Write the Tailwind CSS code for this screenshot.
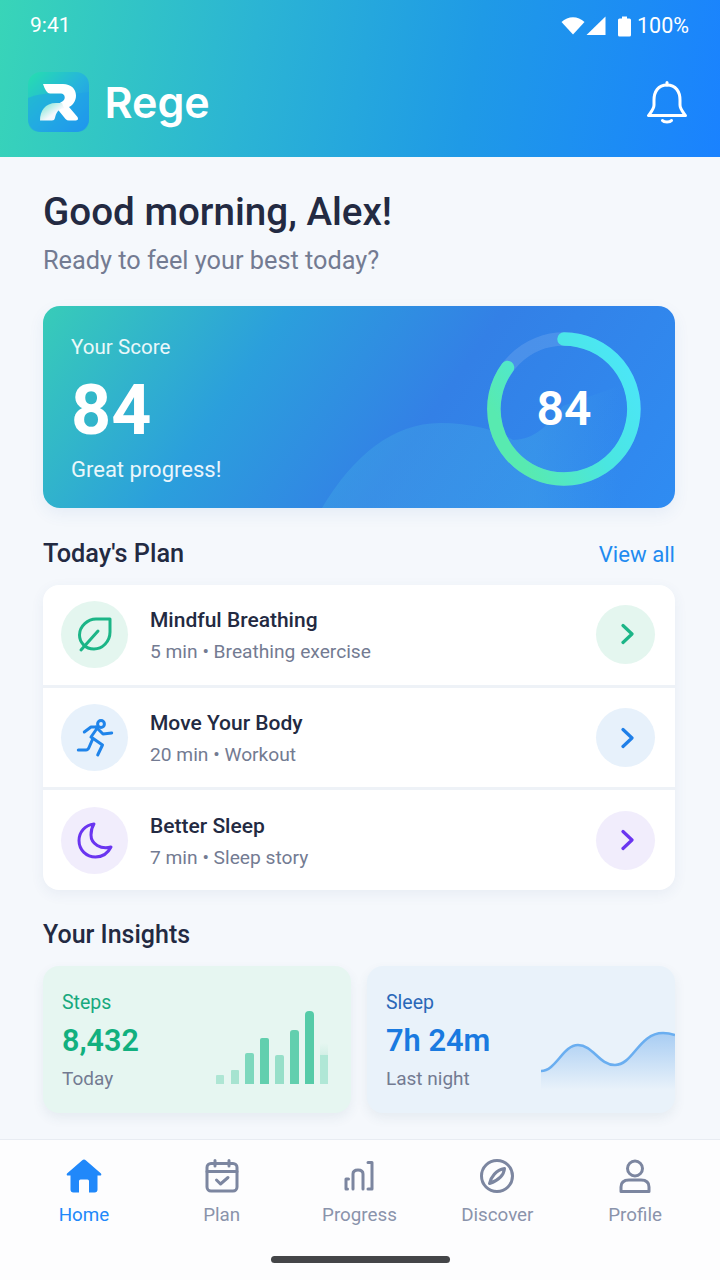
<!DOCTYPE html>
<html lang="en">
<head>
    <meta charset="UTF-8">
    <meta name="viewport" content="width=device-width, initial-scale=1.0">
    <title>Rege</title>
    <script src="https://cdn.jsdelivr.net/npm/@tailwindcss/browser@4"></script>
</head>
<body class="bg-[#f5f8fc] font-['Roboto',sans-serif] text-[#232a42]">
<div class="w-[720px] h-[1280px] flex flex-col overflow-hidden">

    <!-- Header -->
    <header class="h-[157px] shrink-0 text-white bg-[linear-gradient(100deg,#38d5b8_0%,#2bb4d4_35%,#1f9ae6_65%,#1a82ff_100%)]">
        <div class="h-[52px] pl-[30px] pr-[31px] flex items-center justify-between text-[21px]">
            <span>9:41</span>
            <div class="flex items-center">
                <svg class="mr-[1px]" width="24" height="20" viewBox="0 0 24 20" fill="#fff"><path d="M0.5 6 C7 -0.5 17 -0.5 23.5 6 L12 18.5Z"/></svg>
                <svg class="mr-[12px]" width="20" height="20" viewBox="0 0 20 20" fill="#fff"><path d="M19.5 0.5V19H0.5Z"/></svg>
                <svg class="mr-[6px]" width="13" height="21" viewBox="0 0 13 21" fill="#fff"><path d="M4 0.5H9V2.5H11.5Q13 2.5 13 4V19Q13 20.5 11.5 20.5H1.5Q0 20.5 0 19V4Q0 2.5 1.5 2.5H4Z"/></svg>
                <span class="text-[21.5px]">100%</span>
            </div>
        </div>
        <div class="mt-[20px] pl-[28px] pr-[33px] flex items-center justify-between">
            <div class="flex items-center gap-[15.5px]">
                <svg width="61" height="60" viewBox="0 0 61 60">
                    <defs>
                        <linearGradient id="logoBg" x1="0" y1="0" x2="1" y2="1"><stop offset="0" stop-color="#26dfae"/><stop offset="0.5" stop-color="#26b4dc"/><stop offset="1" stop-color="#1f8cf2"/></linearGradient>
                        <linearGradient id="logoLeaf" x1="0" y1="0" x2="1" y2="1"><stop offset="0" stop-color="#6fe3cf"/><stop offset="0.6" stop-color="#f4f8fc"/></linearGradient>
                    </defs>
                    <rect width="61" height="60" rx="13" fill="url(#logoBg)"/>
                    <path d="M0 26 C18 18 42 24 61 20 V47 Q61 60 48 60 H13 Q0 60 0 47Z" fill="#1f9fe8" opacity=".45"/>
                    <path d="M15 12 H35 C43 12 48 17 48 23.5 C48 29 45 33 41 35 L49.5 45 Q51 48 48 48.5 H41 Q39 48.5 37.5 47 L27 34 L35 29 C38 27 37 21.5 33 21.5 H22 Q18 21.5 15 12Z" fill="#fff"/>
                    <path d="M12 48.5 C12 39 17 31 28 31 H34 L36 36 C30 37 28 41 27 46 Q26.5 48.5 24 48.5Z" fill="url(#logoLeaf)"/>
                </svg>
                <span class="font-['Inter',sans-serif] font-semibold text-[43px] leading-none">Rege</span>
            </div>
            <svg width="40" height="44" viewBox="0 0 40 44" fill="none" stroke="#fff" stroke-width="3" stroke-linecap="round" stroke-linejoin="round">
                <path d="M20 5 C11 5 7 12 7 20 V25 C7 29 4 32 1.5 35.5 H38.5 C36 32 33 29 33 25 V20 C33 12 29 5 20 5Z"/>
                <path d="M20 2.5V5"/>
                <path d="M15.5 40.5 C17 42.5 23 42.5 24.5 40.5"/>
            </svg>
        </div>
    </header>

    <!-- Main -->
    <main class="flex-1 pl-[43px] pr-[45px] pt-[32px]">
        <h1 class="text-[38.6px] leading-[46px] font-medium">Good morning, Alex!</h1>
        <p class="mt-[10px] text-[25.3px] leading-[32px] text-[#737b92]">Ready to feel your best today?</p>

        <!-- Score card -->
        <section class="relative mt-[29px] h-[202px] rounded-[17px] overflow-hidden text-white shadow-[0_6px_16px_rgba(50,100,180,0.08)] bg-[linear-gradient(125deg,#38ccb8_0%,#2b9fdc_32%,#3380e6_60%,#2f8cf2_100%)]">
            <svg class="absolute inset-0" width="632" height="202" viewBox="0 0 632 202">
                <defs>
                    <linearGradient id="wave" x1="0" y1="0" x2="1" y2="0"><stop offset="0.6" stop-color="#46b4e6" stop-opacity=".3"/><stop offset="0.85" stop-color="#46b4e6" stop-opacity="0"/></linearGradient>
                </defs>
                <path d="M279 202 C310 150 350 117 397 117 C430 117 455 125 470 134 C490 134 505 120 520 100 L632 60 V202Z" fill="url(#wave)"/>
            </svg>
            <div class="relative h-full pl-[28px] pr-[34px] flex items-center justify-between">
                <div class="self-start pt-[28px]">
                    <p class="text-[20.6px] leading-[26px] text-white/90">Your Score</p>
                    <p class="mt-[10px] text-[70px] leading-[80px] font-bold">84</p>
                    <p class="mt-[6px] text-[22px] leading-[28px] text-white/90">Great progress!</p>
                </div>
                <div class="relative mt-[3px] w-[154px] h-[154px] flex items-center justify-center">
                    <svg class="absolute inset-0" width="154" height="154" viewBox="0 0 154 154" fill="none">
                        <defs>
                            <linearGradient id="ring" x1="1" y1="0.2" x2="0.1" y2="0.7"><stop offset="0" stop-color="#4ce6f8"/><stop offset="0.5" stop-color="#4ae6e0"/><stop offset="1" stop-color="#58eab0"/></linearGradient>
                        </defs>
                        <circle cx="77" cy="77" r="70" stroke="#fff" stroke-opacity=".12" stroke-width="13.5"/>
                        <path d="M77 7 A70 70 0 1 1 20.5 35.5" stroke="url(#ring)" stroke-width="13.5" stroke-linecap="round"/>
                    </svg>
                    <span class="relative text-[48px] leading-none font-semibold">84</span>
                </div>
            </div>
        </section>

        <!-- Today's plan -->
        <div class="mt-[30px] flex items-center justify-between">
            <h2 class="text-[25.3px] leading-[32px] font-medium">Today's Plan</h2>
            <a class="text-[22.2px] leading-[32px] text-[#1f8bf0]">View all</a>
        </div>
        <section class="mt-[15px] bg-white rounded-[16px] shadow-[0_4px_14px_rgba(50,80,140,0.07)] divide-y-[3px] divide-[#eef2f7]">
            <div class="h-[103px] pb-[2px] pl-[18px] pr-[20px] flex items-center">
                <div class="w-[67px] h-[67px] rounded-full bg-[#e4f6ef] flex items-center justify-center">
                    <svg width="40" height="40" viewBox="0 0 40 40" fill="none" stroke="#1cb587" stroke-width="3" stroke-linecap="round" stroke-linejoin="round">
                        <path d="M35 5 V18 C35 28 27 35 19 35 C10 35 4.5 28 4.5 21 C4.5 12 13 5 21 5Z"/>
                        <path d="M23 17 L6 36"/>
                    </svg>
                </div>
                <div class="ml-[22px] pt-[3px] flex-1">
                    <p class="text-[21px] leading-[28px] font-medium">Mindful Breathing</p>
                    <p class="mt-[4px] text-[19.2px] leading-[28px] text-[#737b92]">5 min • Breathing exercise</p>
                </div>
                <div class="w-[59px] h-[59px] rounded-full bg-[#e4f6ef] flex items-center justify-center">
                    <svg width="16" height="24" viewBox="0 0 16 24" fill="none" stroke="#1cb587" stroke-width="3.2" stroke-linecap="round" stroke-linejoin="round"><path d="M5 3.5 L14 12 L5 20.5"/></svg>
                </div>
            </div>
            <div class="h-[102px] pl-[18px] pr-[20px] flex items-center">
                <div class="w-[67px] h-[67px] rounded-full bg-[#e7f1fb] flex items-center justify-center">
                    <svg width="40" height="40" viewBox="0 0 40 40" fill="none" stroke="#1f84ea" stroke-width="3" stroke-linecap="round" stroke-linejoin="round">
                        <circle cx="26" cy="6" r="3.4"/>
                        <path d="M9.3 14 L16 9 H23 L16 19 L27.5 27 L22.7 37"/>
                        <path d="M21 9 L28 16 L36.7 15"/>
                        <path d="M3.3 32 H11 Q13 32 14 29.5 L17.7 21"/>
                    </svg>
                </div>
                <div class="ml-[22px] pt-[3px] flex-1">
                    <p class="text-[21px] leading-[28px] font-medium">Move Your Body</p>
                    <p class="mt-[4px] text-[19.2px] leading-[28px] text-[#737b92]">20 min • Workout</p>
                </div>
                <div class="w-[59px] h-[59px] rounded-full bg-[#e7f1fb] flex items-center justify-center">
                    <svg width="16" height="24" viewBox="0 0 16 24" fill="none" stroke="#1f7fe8" stroke-width="3.2" stroke-linecap="round" stroke-linejoin="round"><path d="M5 3.5 L14 12 L5 20.5"/></svg>
                </div>
            </div>
            <div class="h-[100px] pl-[18px] pr-[20px] flex items-center">
                <div class="w-[67px] h-[67px] rounded-full bg-[#f1edfc] flex items-center justify-center">
                    <svg width="40" height="40" viewBox="0 0 40 40" fill="none" stroke="#6a35f0" stroke-width="3" stroke-linecap="round" stroke-linejoin="round">
                        <path d="M19 4 C10 5 4 12 4 20.5 C4 30 11.5 37 20.5 37 C27.5 37 33 33 36 27 C26 30 16 24 16 15 C16 11 17 7 19 4Z"/>
                    </svg>
                </div>
                <div class="ml-[22px] pt-[3px] flex-1">
                    <p class="text-[21px] leading-[28px] font-medium">Better Sleep</p>
                    <p class="mt-[4px] text-[19.2px] leading-[28px] text-[#737b92]">7 min • Sleep story</p>
                </div>
                <div class="w-[59px] h-[59px] rounded-full bg-[#f1edfc] flex items-center justify-center">
                    <svg width="16" height="24" viewBox="0 0 16 24" fill="none" stroke="#6a35f0" stroke-width="3.2" stroke-linecap="round" stroke-linejoin="round"><path d="M5 3.5 L14 12 L5 20.5"/></svg>
                </div>
            </div>
        </section>

        <!-- Insights -->
        <h2 class="mt-[29px] text-[25px] leading-[32px] font-medium">Your Insights</h2>
        <div class="mt-[15px] grid grid-cols-[308px_308px] gap-[16px]">
            <div class="h-[147px] rounded-[16px] bg-[#e6f6f1] shadow-[0_5px_12px_rgba(50,90,120,0.08)] pl-[19px] pr-[23px] flex justify-between">
                <div class="pt-[24px]">
                    <p class="text-[19.5px] leading-[26px] text-[#18a97e]">Steps</p>
                    <p class="mt-[5px] text-[30.5px] leading-[40px] font-semibold text-[#12b07f]">8,432</p>
                    <p class="mt-[5px] text-[19px] leading-[26px] text-[#737b92]">Today</p>
                </div>
                <div class="mb-[29px] self-end flex items-end gap-[6.5px]">
                    <div class="w-[8px] h-[9px] bg-[#aee6d4] rounded-t-[1px]"></div>
                    <div class="w-[8px] h-[14px] bg-[#a6e3d0] rounded-t-[1px]"></div>
                    <div class="w-[8.5px] h-[31px] bg-[#7dd8bd] rounded-t-[2px]"></div>
                    <div class="w-[8.5px] h-[46px] bg-[#62cfae] rounded-t-[2px]"></div>
                    <div class="w-[8.5px] h-[29px] bg-[#97dfc9] rounded-t-[2px]"></div>
                    <div class="w-[8.5px] h-[54px] bg-[#62cfae] rounded-t-[3px]"></div>
                    <div class="w-[8.5px] h-[73px] bg-[#55cba8] rounded-t-[4px]"></div>
                    <div class="w-[8px] h-[41px] bg-[linear-gradient(#e6f6f1_0%,#d5f0e7_28%,#b0e7d6_30%)] rounded-t-[2px]"></div>
                </div>
            </div>
            <div class="h-[147px] rounded-[16px] bg-[#e9f2fa] shadow-[0_5px_12px_rgba(50,90,120,0.08)] pl-[19px] flex justify-between overflow-hidden">
                <div class="pt-[24px]">
                    <p class="text-[19.5px] leading-[26px] text-[#2a68b8]">Sleep</p>
                    <p class="mt-[5px] text-[30.8px] leading-[40px] font-semibold text-[#1a7ae0]">7h 24m</p>
                    <p class="mt-[5px] text-[19px] leading-[26px] text-[#737b92]">Last night</p>
                </div>
                <svg class="mb-[23px] self-end" width="134" height="60" viewBox="0 0 134 60" fill="none">
                    <defs>
                        <linearGradient id="sleepFill" x1="0" y1="0" x2="0" y2="1"><stop offset="0" stop-color="#7db4ee" stop-opacity=".6"/><stop offset="1" stop-color="#7db4ee" stop-opacity="0"/></linearGradient>
                    </defs>
                    <path d="M0 41 C15 41 22 15 37 15 C52 15 58 35 74 35 C92 35 98 3 122 3 Q128 3 134 5 V60 H0Z" fill="url(#sleepFill)"/>
                    <path d="M0 41 C15 41 22 15 37 15 C52 15 58 35 74 35 C92 35 98 3 122 3 Q128 3 134 5" stroke="#6aaef0" stroke-width="2.6"/>
                </svg>
            </div>
        </div>
    </main>

    <!-- Bottom nav -->
    <nav class="h-[141px] shrink-0 bg-[#fdfdfe] border-t border-[#e8ecf2] flex flex-col">
        <div class="mt-[19px] pl-[15px] pr-[16px] grid grid-cols-5 text-[18.8px] leading-[24px] text-[#8a93ab]">
            <div class="flex flex-col items-center text-[#2088fa]">
                <svg width="36" height="34" viewBox="0 0 36 34" fill="#2088fa"><path d="M18 0.5 Q19 0.5 20 1.5 L35 14.5 Q36 16.5 34 16.5 H31.5 V30.5 Q31.5 33.5 28.5 33.5 H23 V22 Q23 20.5 21.5 20.5 H14.5 Q13 20.5 13 22 V33.5 H7.5 Q4.5 33.5 4.5 30.5 V16.5 H2 Q0 16.5 1 14.5 L16 1.5 Q17 0.5 18 0.5Z"/></svg>
                <span class="mt-[10px]">Home</span>
            </div>
            <div class="flex flex-col items-center">
                <svg width="34" height="34" viewBox="0 0 34 34" fill="none" stroke="#7c86a0" stroke-width="3" stroke-linecap="round" stroke-linejoin="round">
                    <rect x="2" y="4.5" width="30" height="27.5" rx="4"/>
                    <path d="M2 12.5H32M10 1.5V7M24 1.5V7"/>
                    <path d="M11.5 21 L15.5 25 L23 18.5"/>
                </svg>
                <span class="mt-[10px]">Plan</span>
            </div>
            <div class="flex flex-col items-center">
                <svg width="34" height="34" viewBox="0 0 34 34" fill="none" stroke="#7c86a0" stroke-width="3" stroke-linecap="round" stroke-linejoin="round">
                    <path d="M6.5 20 H4 V30 H5.5"/>
                    <path d="M11 30 V15 Q11 11 16 11 Q21 11 21 15 V30"/>
                    <path d="M26 3.5 H30 V30 H26"/>
                </svg>
                <span class="mt-[10px]">Progress</span>
            </div>
            <div class="flex flex-col items-center">
                <svg width="34" height="34" viewBox="0 0 34 34" fill="none" stroke="#7c86a0" stroke-width="3" stroke-linecap="round" stroke-linejoin="round">
                    <circle cx="17" cy="17" r="15.5"/>
                    <path d="M24.5 9.5 C24 15 21 20.5 9.5 24.5 C11 18 16 11 24.5 9.5Z"/>
                </svg>
                <span class="mt-[10px]">Discover</span>
            </div>
            <div class="flex flex-col items-center">
                <svg width="34" height="34" viewBox="0 0 34 34" fill="none" stroke="#7c86a0" stroke-width="3" stroke-linecap="round" stroke-linejoin="round">
                    <circle cx="17" cy="9.5" r="7.5"/>
                    <path d="M3 32.5 V28 Q3 21 11 21 H23 Q31 21 31 28 V32.5Z"/>
                </svg>
                <span class="mt-[10px]">Profile</span>
            </div>
        </div>
        <div class="mt-[29px] mx-auto w-[179px] h-[7px] rounded-full bg-[#444548]"></div>
    </nav>
</div>
</body>
</html>
